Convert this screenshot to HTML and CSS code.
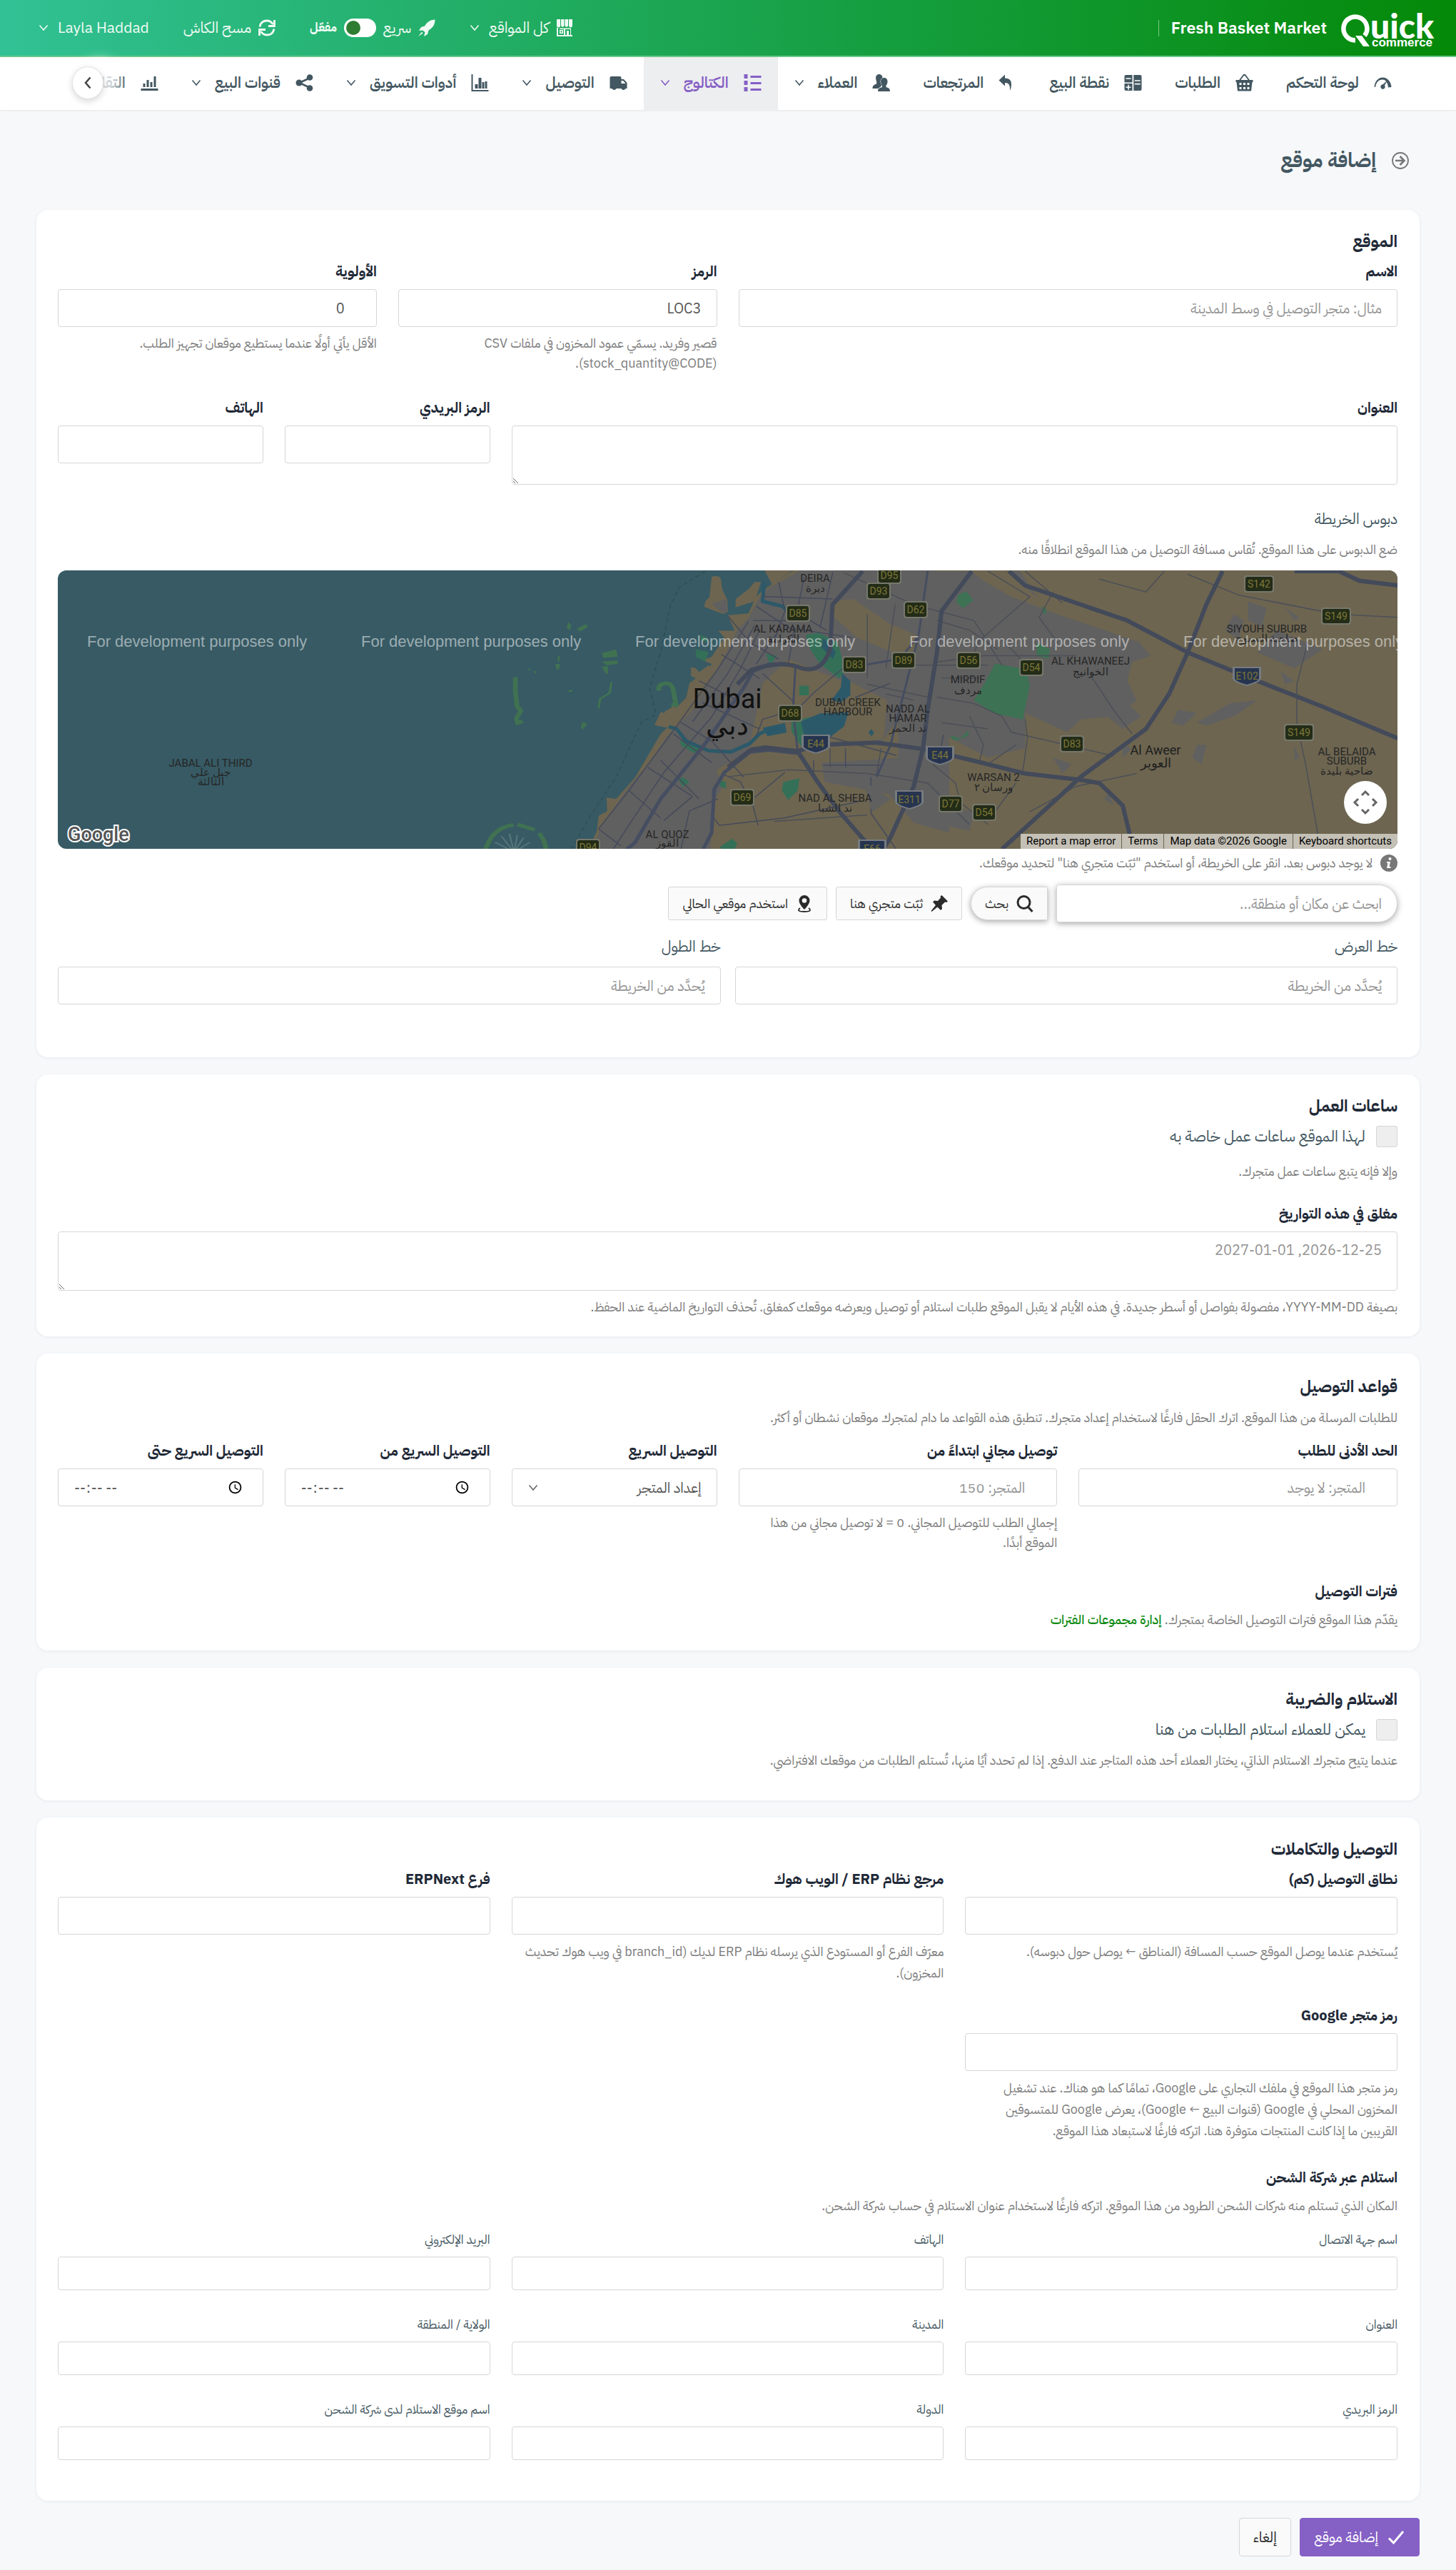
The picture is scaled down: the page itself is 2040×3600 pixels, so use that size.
FILE: index.html
```html
<!DOCTYPE html>
<html lang="ar" dir="rtl">
<head>
<meta charset="utf-8">
<meta name="viewport" content="width=device-width, initial-scale=1">
<title>إضافة موقع</title>
<link rel="stylesheet" href="styles.css">
</head>
<body>
<svg class="defs" aria-hidden="true">
  <symbol id="chev" viewBox="0 0 14 10"><path d="M1.500 1.500 7 8l5.500-6.500" fill="none" stroke="currentColor" stroke-width="1.600"/></symbol>
</svg>

<header class="topbar">
  <a class="logo" href="#" aria-label="Quick commerce">
    <svg width="130" height="56" viewBox="0 0 130 56" fill="#fff">
      <path d="M20 45.500A16.500 16.500 0 1 1 33 39" fill="none" stroke="#fff" stroke-width="6.500"/>
      <path d="M20 39h9l11 15h-9z"/>
      <text class="logo-main" x="41" y="43">uick</text>
      <text class="logo-sub" x="43" y="54">commerce</text>
    </svg>
  </a>
  <span class="store">Fresh Basket Market</span>
  <div class="actions">
    <button class="action" type="button">
      <svg class="ico" viewBox="0 0 24 24" fill="currentColor"><path d="M1 0h5v9a2.500 2.500 0 0 1-5 0zM7 0h4.500v9a2.300 2.300 0 0 1-4.500 0zM12.500 0H17v9a2.300 2.300 0 0 1-4.500 0zM18 0h5v9a2.500 2.500 0 0 1-5 0zM1 12h2v10h8v-8h-6v-1.500h16V22h2v2H1zM5 15h5v5H5zm1.500 1.500v2h2v-2zM13 14v8h2v-6h3v6h2v-8z" fill-rule="evenodd"/></svg>
      <span>كل المواقع</span><svg class="chev push"><use href="#chev"/></svg>
    </button>
    <label class="action switch">
      <svg class="ico" viewBox="0 0 24 24" fill="currentColor"><path d="M23.500.500c-6 0-11 3-14.500 9L4 11l-3 5 5-.500L9.500 18 8 24l5-3 1.500-5.500C20.500 12 23.500 7 23.500.500zM5 17.500 0 24l6.500-4.500z"/></svg>
      <span>سريع</span>
      <input type="checkbox" class="toggle" checked>
      <span class="state">مفعّل</span>
    </label>
    <button class="action" type="button">
      <svg class="ico" viewBox="0 0 24 24" fill="none" stroke="currentColor" stroke-width="2.800"><path d="M2 10.500C3 5 7 2 12 2c4 0 6.500 1.800 8.500 5M22.500 1v8.500H14M22 13.500C21 19 17 22 12 22c-4 0-6.500-1.800-8.500-5M1.500 23v-8.500H10"/></svg>
      <span>مسح الكاش</span>
    </button>
    <button class="action" type="button"><span>Layla Haddad</span><svg class="chev push"><use href="#chev"/></svg></button>
  </div>
</header>

<nav class="nav">
  <div class="nav-track">
    <a class="nav-item" href="#"><svg class="nico" viewBox="0 0 24 24" fill="currentColor"><path d="M0 18C1 9 6 4.500 12 4.500S23.500 10 24 18l-4.500.500C19 12 16 7.500 11.500 7.500 6 7.500 3 11 1.500 18zM19 8l-4.500 7.500a3.200 3.200 0 1 1-2.500-1.200z"/></svg><span>لوحة التحكم</span></a>
    <a class="nav-item" href="#"><svg class="nico" viewBox="0 0 24 24" fill="currentColor"><path d="M0 8h24v3h-1l-1.500 12.500h-19L1 11H0zM5 12v3h3v-3zm5.500 0v3h3v-3zm5.500 0v3h3v-3zM5 18v3h3v-3zm5.500 0v3h3v-3zm5.500 0v3h3v-3z" fill-rule="evenodd"/><path d="m5 9 6-8h2l6 8" fill="none" stroke="currentColor" stroke-width="1.800"/></svg><span>الطلبات</span></a>
    <a class="nav-item" href="#"><svg class="nico" viewBox="0 0 24 24" fill="currentColor"><path d="M2 1h9v10.500H0V3q0-2 2-2zm0 4.200v1.600h7V5.200zM12.800 1H22q2 0 2 2v18q0 2-2 2h-9.200zm1.400 7.200v1.600h8V8.200zm0 4.600v1.600h8v-1.600zM0 13h11v10H2q-2 0-2-2zm4.700 1.700v2.700H2v1.600h2.700v2.700h1.600v-2.700H9v-1.600H6.300v-2.700z" fill-rule="evenodd"/></svg><span>نقطة البيع</span></a>
    <a class="nav-item" href="#"><svg class="nico" viewBox="0 0 24 24" fill="currentColor"><path d="M0 8.500 8.500.500v5C15 5.500 17.500 9 17.500 14c0 4-1 7-2 9 .500-8-1.500-11-7-11v4.500z"/></svg><span>المرتجعات</span></a>
    <a class="nav-item" href="#"><svg class="nico" viewBox="0 0 24 24" fill="currentColor"><path d="M9 0c3.500 0 5 2.500 5 5-3 1.500-3.500 5-2.500 8l1.500 3-5 4H0c0-4 2-5.500 5.500-6.500C6.500 11 4.500 8 4.500 5c0-3 2-5 4.500-5z"/><path d="M16.500 5c3 0 4.500 2.500 4.500 5 0 3-1 4.500-2 5.500v2.500c3.500 1 5.500 2 5.500 6H7.500c0-4 2.500-5 6-6v-2.500c-1-1-2-2.500-2-5.500 0-3 2-5 5-5z"/></svg><span>العملاء</span><svg class="chev"><use href="#chev"/></svg></a>
    <a class="nav-item active" href="#"><svg class="nico" viewBox="0 0 24 24" fill="currentColor"><path d="M0 0h5v6H0zm0 9h5v6H0zm0 9h5v6H0zM9 2h15v3H9zm0 9h15v3H9zm0 9h15v3H9z"/></svg><span>الكتالوج</span><svg class="chev"><use href="#chev"/></svg></a>
    <a class="nav-item" href="#"><svg class="nico" viewBox="0 0 24 24" fill="currentColor"><path d="M2 3h12q2 0 2 2v2h3.500L24 12v8h-2a3.200 3.200 0 0 1-6 0H9a3.200 3.200 0 0 1-6 0H0V5q0-2 2-2zm14 6v4h6l-3.500-4z" fill-rule="evenodd"/></svg><span>التوصيل</span><svg class="chev"><use href="#chev"/></svg></a>
    <a class="nav-item" href="#"><svg class="nico" viewBox="0 0 24 24" fill="currentColor"><path d="M0 0h2v22h22v2H0zM5 14h4v6H5zm5-9h4v15h-4zm5 6h3v9h-3zm4-1h3v10h-3z"/></svg><span>أدوات التسويق</span><svg class="chev"><use href="#chev"/></svg></a>
    <a class="nav-item" href="#"><svg class="nico" viewBox="0 0 24 24" fill="currentColor"><circle cx="4.500" cy="12" r="4.500"/><circle cx="19.500" cy="4.500" r="4.300"/><circle cx="19.500" cy="19.500" r="4.300"/><path d="M20 5 5 12l15 7" fill="none" stroke="currentColor" stroke-width="2.600"/></svg><span>قنوات البيع</span><svg class="chev"><use href="#chev"/></svg></a>
    <a class="nav-item" href="#"><svg class="nico" viewBox="0 0 24 24" fill="currentColor"><path d="M0 20h24v3H0zM3 13h3v5H3zm5-5h3v10H8zm5 3h3v7h-3zm5-8h3v15h-3z"/></svg><span>التقارير</span><svg class="chev"><use href="#chev"/></svg></a>
  </div>
  <button class="nav-next" type="button" aria-label="المزيد"><svg width="10" height="18" viewBox="0 0 10 18"><path d="M8.500 1.500 2 9l6.500 7.500" fill="none" stroke="#444" stroke-width="2.500"/></svg></button>
</nav>

<main class="page">
  <h1 class="page-title">
    <a href="#" class="back" aria-label="رجوع"><svg class="ico" viewBox="0 0 24 24" fill="none" stroke="currentColor" stroke-width="1.800"><circle cx="12" cy="12" r="11"/><path d="M5 12h12M11.500 6l6 6-6 6" stroke-width="2.600"/></svg></a>
    إضافة موقع
  </h1>

  <form class="form">
    <section class="card card-tall">
      <h2 class="card-title">الموقع</h2>
      <div class="grid">
        <div class="field span-6"><label for="name">الاسم</label><input class="control" id="name" type="text" placeholder="مثال: متجر التوصيل في وسط المدينة"></div>
        <div class="field span-3"><label for="code">الرمز</label><input class="control" id="code" type="text" value="LOC3"><p class="hint inset">قصير وفريد. يسمّي عمود المخزون في ملفات CSV (stock_quantity@CODE).</p></div>
        <div class="field span-3"><label for="prio">الأولوية</label><input class="control" id="prio" type="number" value="0"><p class="hint inset">الأقل يأتي أولًا عندما يستطيع موقعان تجهيز الطلب.</p></div>
      </div>
      <div class="grid">
        <div class="field span-8"><label for="addr">العنوان</label><textarea class="control area" id="addr"></textarea></div>
        <div class="field span-2"><label for="zip">الرمز البريدي</label><input class="control" id="zip" type="text"></div>
        <div class="field span-2"><label for="tel">الهاتف</label><input class="control" id="tel" type="tel"></div>
      </div>
      <div class="pin">
        <p class="text">دبوس الخريطة</p>
        <p class="hint">ضع الدبوس على هذا الموقع. تُقاس مسافة التوصيل من هذا الموقع انطلاقًا منه.</p>
        <div class="map">
          <svg class="map-art" viewBox="0 0 1877 390" preserveAspectRatio="xMinYMid slice" role="img" aria-label="Dubai">
            <defs>
              <g id="sd"><rect x="-17" y="-12" width="34" height="24" rx="4" fill="#77786c"/><rect x="-15" y="-10" width="30" height="20" rx="3" fill="#232c17"/></g>
              <g id="ss"><rect x="-21" y="-12" width="42" height="24" rx="4" fill="#77786c"/><rect x="-19" y="-10" width="38" height="20" rx="3" fill="#232c17"/></g>
              <g id="se"><path d="M-20-13h40v17q-2 5-20 10-18-5-20-10z" fill="#767b80"/><path d="M-17-11h34V4q-2 4-17 8-15-4-17-8z" fill="#26344f"/></g>
            </defs>
            <rect width="1877" height="390" fill="#375a64"/>
            <!-- coastline, built-up districts and western roads -->
            <g transform="translate(559 -4) scale(.44643 .33755)">
              <path fill="#6d6550" d="M1070 0 965 90 940 120 915 190 850 198 872 262 820 262 840 290 800 370 770 385 800 400 770 470 740 430 735 415 742 400 700 560 650 600 680 640 640 690 600 780 560 870 500 960 470 955 472 1010 445 1030 440 1090 405 1200H2960V0z"/>
              <path fill="#375a64" d="m700 400 60 0-10 60-20 20-10 60-30 40-50-20z"/>
              <path fill="#6d6550" d="M735 415q15-5 25 20l30-30 10 10-30 55-35-20zM800 38q20-6 28 5l6 50 15 40 2 50-15 10-60-30 5-25 12-15zM955 60l-20 80-60 25v-35l40-40 20-30zM965 10h90l-65 60zM640 600q40 10 45 45l-20 20-45-10z"/>
              <path fill="#606060" d="M1080 10 960 100 915 210 880 260 840 370 740 590 660 700 610 800 540 910 450 1080 425 1200h370l10-230 30-60-20-70 100-80 40-100 10-150 90-60 100 0 90 30 60 60 20 200 60-110 0 160-240 20 10 80 200 50 80 120 110 40V300L1500 0zM800 150l45-20 5 50-15 10z"/>
              <path fill="#6d6550" d="m1185 140 60-10 110 100 100 60 30 40-100 30-130-70-75-90zM830 880l120-90 140 0 60 70-110 0-100 130-60 100zM960 480l80-100 150 80 0 130-100-30-40 170-90 60-40-60zM1230 470l120 80-10 160-180 30-20-60 90-80z"/>
              <path fill="#347058" d="M1095 280l40-10 60 40 25 120-20 30-60-60-30-60zM700 720l20-10 50 40-25 20-40-30zM695 880l15-10 20 20-20 20zM1025 890l50-15-5 50-30 40-20-40zM970 360l35 5-20 40zM1075 490h30v40h-30zM1050 640l60-20 20 20-40 30 20 60-25 20-35-70zM750 340l40 10-10 40-30-20zM820 880l25 10 0 30-20-15zM825 1160l40-35 15 20-20 55zM765 280l20 10 0 20-20-10z"/>
              <path fill="#2c5969" d="M1080 640l60-35 90-5-15 60-50 50-70 10zM1210 440l25 30 0 60-30 30-30-10 30-50zM1150 290l40 60-10 30-35-50zM1300 670l10 15-8 15-10-15zM960 665l70-20 5 40-60 15z"/>
              <path fill="none" stroke="#2c5969" stroke-width="5" vector-effect="non-scaling-stroke" d="M965 60 960 140 1020 160 1080 220M665 660 690 670 720 720 790 760 860 765 920 730 950 690 1000 660"/>
              <g fill="#407252">
                <path d="M350 225l10 15-5 20-10-10zM375 255l30-20 8 10-25 20zM455 355l45-15 5 30-45 5zM455 390l50-5 0 15-35 5zM455 410h20l0 30-8 0zM220 420h10l0 8zM240 430l12 0-4 12zM345 512l18-6-2 12zM395 640l15 10-15 22-6-10zM310 400h14l-4 26-10-10zM318 365h6l-2 25h-6z"/>
                <g fill="none" stroke="#407252"><path d="M184 455l0 60 5 60 12 20-14 30 4 20 16-8M635 510q-5-25 20-30 20 0 25 30l8 60-15 0" stroke-width="15"/><path d="M485 475l-5 45-30 25-5 40" stroke-width="7"/><path d="M88 1180q20-100 90-112M190 1066l55 22M258 1102q25 40 22 90" stroke-width="15"/><path d="M180 1180l-60-40M180 1180l-40-65M180 1180l-15-75M180 1180l10-70M180 1180l30-60M180 1180l50-40" stroke-width="5" stroke="#56757a"/></g>
              </g>
              <g fill="none" stroke="#454a5b" stroke-width="1.500">
                <path vector-effect="non-scaling-stroke" d="M915 225 820 420 700 640 540 925 445 1085M935 240 850 440 740 640M950 260 890 420 800 620 650 850 520 1110 480 1190M600 830l140 120M680 690l120 120M540 925l100 115M445 1085l70 70M760 470l120 80M830 360l120 100M850 200l70 110 90 70M700 640l100 80 100 150M740 950l-90 100M840 860l50 30 40 100 15 80M1060 590 960 630 940 700M1030 850 930 960M1210 420 1120 520 1060 600M770 560l180 110M820 960 730 1010 700 1190M640 800 760 960M800 1030l25 40 200-30 240-70M1120 860v-60M1160 700l220 80M1220 750v80M1150 820h180M1300 870l0 150 90 170M960 120l220 10M1010 60l20 120-30 110M1090 40l-20 130M1180 20l-40 230M940 160l100 90 200 40M930 220l180 0 50 40M1000 280l-60 120M1060 250l-20 150M960 440l100 120M1250 540l110-60M1440 380l90 40 30 140M1480 560l60 60-20 120"/>
              </g>
              <g fill="none" stroke="#454d61" stroke-width="5">
                <path vector-effect="non-scaling-stroke" d="M1035 400 980 402 930 430 900 500 780 730 640 960 560 1140 515 1190M1070 770 980 757 920 765 840 850 808 920 800 1100 765 1190"/>
              </g>
              <path fill="none" stroke="#2b474f" stroke-width="1" stroke-dasharray="6 4" vector-effect="non-scaling-stroke" d="M780 15 700 80 670 160 640 350 605 500 625 610 580 640 500 870 420 1030 350 1190"/>
            </g>
            <!-- eastern districts and desert roads -->
            <g transform="translate(939 -19) scale(.65062 .44643)">
              <path fill="#606060" d="M440 45h190l30 70 60 60 150 65 40 70-40 20-10 60 20 60-40 50-80 10-30 40-90-60 0 110-80 30-120-90-40-200z"/>
              <path fill="#606060" d="M820 370l50 50-10 40 30 40-40 40-50-60zM1120 140l40 20-10 60-30-20zM1090 180l20 20-10 60-30-30zM970 480l40 10-30 40-25-10zM1010 520l70-60 60-10-50 50-60 30zM1180 230l100 60-60 60-80-50zM1200 160l30 30-10 10zM1010 590l20 0-10 60-20-20zM850 590l20 10-20 30zM820 740l10 40-20-20zM1190 360l30 30-20 10zM700 630l40 20-20 30zM470 780l60 20-10 60-60-20zM1220 590l10 40-10 10zM290 700l60 60-40 40z"/>
              <path fill="#6d6550" d="M525 45h75l60 75 150 80 120 60-50 5-180-90-90-50-60-50z"/>
              <path fill="#3d7254" d="M575 335l67 18 8 50-15 107-65-20-40-40 25-60zM495 120l18-12 15 28-22 26-14-20zM665 270l28 20-3 30-25-10zM675 155l12 10-6 18zM480 560l20 10 18-25v15l-25 16-12-5z"/>
              <g fill="none" stroke="#4c4f58" stroke-width="1.500">
                <path vector-effect="non-scaling-stroke" d="M560 45l90 80-110 140-20 70M640 45l80 100M940 45l-40 65-100-40M780 370l50 110 40 75M640 510l5 60-10 100M450 440l80 20 60 40 20 50 220 75M300 400l130 40M300 380v-200M340 430l60 20M360 150l-20 200M450 330l100-20 200 0M250 50l150 100 130 50 60 140M700 110l-30 80 40 80M450 200l70 30 60 60M520 500l30 90-10 60M460 520l100 20M1443 190 1310 180 1100 120 990 55M1250 260l-25 140 0 120 20 140 30 250M440 650l50 60 10 60 60 70M560 830l60-120M880 680l-130 40-100 80M400 340l160 0M460 380l80 0M590 260l60 90M620 590l-60 60M220 600v60M330 600l-10 80M0 690 130 668 300 680 430 710 520 840M100 830 300 810"/>
              </g>
              <path fill="none" stroke="#454d61" stroke-width="3" vector-effect="non-scaling-stroke" d="M430 45 410 250 350 590 320 690M145 350 140 480 150 610M410 250 370 320 250 350"/>
              <g fill="none" stroke="#434a5a" stroke-width="6">
                <path vector-effect="non-scaling-stroke" d="M605 45 640 90 860 200 990 300 1090 360 1150 395 1280 470 1443 570M1220 45h95l45 30 83 15M1065 45 1030 150 990 300 950 430 900 540 760 690 590 917M0 660 50 605 80 598 150 610 190 590 320 583 430 605 530 640 640 680 760 700 800 710 850 780 865 870M525 45 460 170 450 300 430 480 420 600 400 720 350 880 335 917M290 45 225 150 220 290Q200 375 150 345 110 325 50 355L20 400M150 610 190 700 240 800 310 917"/>
              </g>
            </g>
            <g class="m-area">
              <text x="1061" y="16">DEIRA</text><text x="1061" y="30">ديرة</text>
              <text x="1016" y="87">AL KARAMA</text><text x="1016" y="101">الكرامة</text>
              <text x="1694" y="87">SIYOUH SUBURB</text><text x="1694" y="100">ضاحية السيوح</text>
              <text x="1447" y="132">AL KHAWANEEJ</text><text x="1447" y="147">الخوانيج</text>
              <text x="1275" y="158">MIRDIF</text><text x="1275" y="173">مردف</text>
              <text x="1107" y="190">DUBAI CREEK</text><text x="1107" y="203">HARBOUR</text>
              <text x="1191" y="199">NADD AL</text><text x="1191" y="212">HAMAR</text><text x="1191" y="226">ند الحمر</text>
              <text x="1311" y="295">WARSAN 2</text><text x="1311" y="309">ورسان ٢</text>
              <text x="1089" y="324">NAD AL SHEBA</text><text x="1089" y="338">ند الشبا</text>
              <text x="1806" y="259">AL BELAIDA</text><text x="1806" y="272">SUBURB</text><text x="1806" y="286">ضاحية بليدة</text>
              <text x="854" y="375">AL QUOZ</text><text x="854" y="387">القوز</text>
              <text x="214" y="275">JABAL ALI THIRD</text><text x="214" y="288">جبل علي</text><text x="214" y="301">الثالثة</text>
            </g>
            <g class="m-town"><text x="1538" y="258">Al Aweer</text><text x="1538" y="276">العوير</text></g>
            <g class="m-city"><text x="938" y="193">Dubai</text><text x="938" y="230">دبي</text></g>
            <g class="m-road">
              <g transform="translate(1165 7)"><use href="#sd"/><text y="5">D95</text></g>
              <g transform="translate(1150 29)"><use href="#sd"/><text y="5">D93</text></g>
              <g transform="translate(1037 60)"><use href="#sd"/><text y="5">D85</text></g>
              <g transform="translate(1202 55)"><use href="#sd"/><text y="5">D62</text></g>
              <g transform="translate(1116 132)"><use href="#sd"/><text y="5">D83</text></g>
              <g transform="translate(1185 126)"><use href="#sd"/><text y="5">D89</text></g>
              <g transform="translate(1276 126)"><use href="#sd"/><text y="5">D56</text></g>
              <g transform="translate(1364 136)"><use href="#sd"/><text y="5">D54</text></g>
              <g transform="translate(1683 19)"><use href="#ss"/><text y="5">S142</text></g>
              <g transform="translate(1791 64)"><use href="#ss"/><text y="5">S149</text></g>
              <g transform="translate(1666 148)"><use href="#se"/><text y="5">E102</text></g>
              <g transform="translate(1026 200)"><use href="#sd"/><text y="5">D68</text></g>
              <g transform="translate(1062 243)"><use href="#se"/><text y="5">E44</text></g>
              <g transform="translate(1236 259)"><use href="#se"/><text y="5">E44</text></g>
              <g transform="translate(1421 243)"><use href="#sd"/><text y="5">D83</text></g>
              <g transform="translate(1739 227)"><use href="#ss"/><text y="5">S149</text></g>
              <g transform="translate(959 318)"><use href="#sd"/><text y="5">D69</text></g>
              <g transform="translate(1193 321)"><use href="#se"/><text y="5">E311</text></g>
              <g transform="translate(1251 327)"><use href="#sd"/><text y="5">D77</text></g>
              <g transform="translate(1298 339)"><use href="#sd"/><text y="5">D54</text></g>
              <g transform="translate(1141 390)"><use href="#se"/><text y="5">E66</text></g>
              <g transform="translate(743 388)"><use href="#sd"/><text y="5">D94</text></g>
            </g>
            <g class="m-mark">
              <text x="41" y="107">For development purposes only</text><text x="425" y="107">For development purposes only</text><text x="809" y="107">For development purposes only</text><text x="1193" y="107">For development purposes only</text><text x="1577" y="107">For development purposes only</text>
            </g>
            <text class="m-logo" x="14" y="379">Google</text>
          </svg>
          <button class="map-pan" type="button" aria-label="Map camera controls"><svg width="36" height="36" viewBox="0 0 36 36" fill="none" stroke="#666" stroke-width="3"><path d="M13 8l5-5 5 5M13 28l5 5 5-5M8 13l-5 5 5 5M28 13l5 5-5 5"/></svg></button>
          <div class="map-legal" dir="ltr"><a href="#">Report a map error</a><a href="#">Terms</a><span>Map data ©2026 Google</span><button type="button">Keyboard shortcuts</button></div>
        </div>
        <p class="hint info"><svg class="ico" viewBox="0 0 24 24"><circle cx="12" cy="12" r="12" fill="#777"/><circle cx="13.500" cy="6" r="2" fill="#fff"/><path d="M9 10h5l-1.500 7h2v2H9l1.500-7H9z" fill="#fff"/></svg>لا يوجد دبوس بعد. انقر على الخريطة، أو استخدم "ثبّت متجري هنا" لتحديد موقعك.</p>
        <div class="search">
          <input class="control search-box" type="search" aria-label="بحث" placeholder="ابحث عن مكان أو منطقة...">
          <button class="btn search-btn" type="button"><svg class="ico" viewBox="0 0 24 24" fill="none" stroke="currentColor" stroke-width="3"><circle cx="10.500" cy="10" r="8.500"/><path d="m16.500 16.500 6 6.500"/></svg>بحث</button>
          <button class="btn" type="button"><svg class="ico" viewBox="0 0 24 24" fill="currentColor"><path d="m15.500 0 8.500 8.500-2 1.500-2-.500-4.500 4.500.500 5-2 2-4.500-4.500L1.500 23 .500 22 7 14 3 9.500l2-2 5 .500 4-4.500-.500-2z"/></svg>ثبّت متجري هنا</button>
          <button class="btn" type="button"><svg class="ico" viewBox="0 0 24 24" fill="currentColor"><path d="M12 0a7.500 7.500 0 0 1 7.500 7.500c0 4-5 10.500-7.500 12.500-2.500-2-7.500-8.500-7.500-12.500A7.500 7.500 0 0 1 12 0zm0 4.200a3.300 3.300 0 1 0 0 6.600 3.300 3.300 0 0 0 0-6.600z" fill-rule="evenodd"/><path d="M6 18c-5 4 0 5 6 5s11-1 6-5" fill="none" stroke="currentColor" stroke-width="1.800"/></svg>استخدم موقعي الحالي</button>
        </div>
        <div class="coords">
          <div><label class="text" for="lat">خط العرض</label><input class="control" id="lat" type="text" placeholder="يُحدَّد من الخريطة"></div>
          <div><label class="text" for="lng">خط الطول</label><input class="control" id="lng" type="text" placeholder="يُحدَّد من الخريطة"></div>
        </div>
      </div>
    </section>

    <section class="card">
      <h2 class="card-title tight">ساعات العمل</h2>
      <label class="check"><input type="checkbox">لهذا الموقع ساعات عمل خاصة به</label>
      <p class="hint after-check">وإلا فإنه يتبع ساعات عمل متجرك.</p>
      <div class="field"><label for="closed">مغلق في هذه التواريخ</label><textarea class="control area" id="closed" placeholder="2026-12-25, 2027-01-01"></textarea><p class="hint">بصيغة YYYY-MM-DD، مفصولة بفواصل أو أسطر جديدة. في هذه الأيام لا يقبل الموقع طلبات استلام أو توصيل ويعرضه موقعك كمغلق. تُحذف التواريخ الماضية عند الحفظ.</p></div>
    </section>

    <section class="card card-rules">
      <h2 class="card-title">قواعد التوصيل</h2>
      <p class="hint lead">للطلبات المرسلة من هذا الموقع. اترك الحقل فارغًا لاستخدام إعداد متجرك. تنطبق هذه القواعد ما دام لمتجرك موقعان نشطان أو أكثر.</p>
      <div class="grid">
        <div class="field span-3"><label for="min">الحد الأدنى للطلب</label><input class="control" id="min" type="number" placeholder="المتجر: لا يوجد"></div>
        <div class="field span-3"><label for="free">توصيل مجاني ابتداءً من</label><input class="control" id="free" type="number" placeholder="المتجر: 150"><p class="hint inset">إجمالي الطلب للتوصيل المجاني. 0 = لا توصيل مجاني من هذا الموقع أبدًا.</p></div>
        <div class="field span-2"><label for="express">التوصيل السريع</label><div class="select"><select class="control" id="express"><option>إعداد المتجر</option></select><svg class="chev"><use href="#chev"/></svg></div></div>
        <div class="field span-2"><label for="from">التوصيل السريع من</label><input class="control" id="from" type="time" dir="ltr" lang="en"></div>
        <div class="field span-2"><label for="until">التوصيل السريع حتى</label><input class="control" id="until" type="time" dir="ltr" lang="en"></div>
      </div>
      <h3 class="sub-title">فترات التوصيل</h3>
      <p class="hint">يقدّم هذا الموقع فترات التوصيل الخاصة بمتجرك. <a class="link" href="#">إدارة مجموعات الفترات</a></p>
    </section>

    <section class="card card-pickup">
      <h2 class="card-title tight">الاستلام والضريبة</h2>
      <label class="check"><input type="checkbox">يمكن للعملاء استلام الطلبات من هنا</label>
      <p class="hint near">عندما يتيح متجرك الاستلام الذاتي، يختار العملاء أحد هذه المتاجر عند الدفع. إذا لم تحدد أيًا منها، تُستلم الطلبات من موقعك الافتراضي.</p>
    </section>

    <section class="card card-last">
      <h2 class="card-title">التوصيل والتكاملات</h2>
      <div class="grid loose">
        <div class="field span-4"><label for="radius">نطاق التوصيل (كم)</label><input class="control" id="radius" type="number"><p class="hint inset">يُستخدم عندما يوصل الموقع حسب المسافة (المناطق ← يوصل حول دبوسه).</p></div>
        <div class="field span-4"><label for="erp">مرجع نظام ERP / الويب هوك</label><input class="control" id="erp" type="text"><p class="hint inset">معرّف الفرع أو المستودع الذي يرسله نظام ERP لديك (branch_id في ويب هوك تحديث المخزون).</p></div>
        <div class="field span-4"><label for="erpn">فرع ERPNext</label><input class="control" id="erpn" type="text"></div>
        <div class="field span-4"><label for="gcode">رمز متجر Google</label><input class="control" id="gcode" type="text"><p class="hint inset">رمز متجر هذا الموقع في ملفك التجاري على Google، تمامًا كما هو هناك. عند تشغيل المخزون المحلي في Google (قنوات البيع ← Google)، يعرض Google للمتسوقين القريبين ما إذا كانت المنتجات متوفرة هنا. اتركه فارغًا لاستبعاد هذا الموقع.</p></div>
      </div>
      <h3 class="sub-title">استلام عبر شركة الشحن</h3>
      <p class="hint">المكان الذي تستلم منه شركات الشحن الطرود من هذا الموقع. اتركه فارغًا لاستخدام عنوان الاستلام في حساب شركة الشحن.</p>
      <div class="grid small">
        <div class="field span-4"><label for="c1">اسم جهة الاتصال</label><input class="control" id="c1" type="text"></div>
        <div class="field span-4"><label for="c2">الهاتف</label><input class="control" id="c2" type="tel"></div>
        <div class="field span-4"><label for="c3">البريد الإلكتروني</label><input class="control" id="c3" type="email"></div>
        <div class="field span-4"><label for="c4">العنوان</label><input class="control" id="c4" type="text"></div>
        <div class="field span-4"><label for="c5">المدينة</label><input class="control" id="c5" type="text"></div>
        <div class="field span-4"><label for="c6">الولاية / المنطقة</label><input class="control" id="c6" type="text"></div>
        <div class="field span-4"><label for="c7">الرمز البريدي</label><input class="control" id="c7" type="text"></div>
        <div class="field span-4"><label for="c8">الدولة</label><input class="control" id="c8" type="text"></div>
        <div class="field span-4"><label for="c9">اسم موقع الاستلام لدى شركة الشحن</label><input class="control" id="c9" type="text"></div>
      </div>
    </section>

    <div class="buttons">
      <button class="btn primary" type="submit"><svg class="ico" viewBox="0 0 24 24" fill="none" stroke="currentColor" stroke-width="3"><path d="M2 13.500 8.500 20 22 4"/></svg>إضافة موقع</button>
      <button class="btn cancel" type="button">إلغاء</button>
    </div>
  </form>
</main>
</body>
</html>
```
FILE: styles.css
```css
:root {
  --slate: #435761;
  --ink: #1f2937;
  --muted: #7c7c7c;
  --line: #d6d6d8;
  --purple: #8560c5;
}
* { box-sizing: border-box; }
body {
  margin: 0;
  background: #f6f8fa;
  color: var(--slate);
  font-family: "IBM Plex Sans Arabic", "Noto Sans", "Open Sans", sans-serif;
  font-size: 20px;
  line-height: 28px;
}
h1, h2, h3, p { margin: 0; }
button, input, select, textarea { font: inherit; color: inherit; }
button { cursor: pointer; }
a { color: inherit; text-decoration: none; }
.defs { display: none; }
.ico { width: 24px; height: 24px; flex: none; }
.chev { width: 14px; height: 10px; flex: none; }

/* Top bar */
.topbar {
  display: flex;
  align-items: center;
  height: 80px;
  padding: 0 31px 0 54px;
  border-bottom: 2px solid #6cc98c;
  background: linear-gradient(to left, #048908, #1aa44e 50%, #31c194);
  color: #fff;
}
.logo { display: flex; }
.logo svg { overflow: visible; direction: ltr; }
.logo-main { font: 900 48px Lato, sans-serif; }
.logo-sub { font: 700 17px "Liberation Sans", sans-serif; }
.store {
  margin-right: 20px;
  padding-left: 17px;
  border-left: 1px solid #7fc782;
  font-size: 23px;
  font-weight: 600;
  line-height: 23px;
}
.actions { display: flex; align-items: center; gap: 48px; margin-right: auto; }
.action {
  display: flex;
  align-items: center;
  gap: 10px;
  padding: 0;
  border: 0;
  background: none;
  color: #f1fbf5;
  font-size: 21px;
}
.push { margin-right: 3px; }
.state { font-size: 17px; font-weight: 700; }
.toggle {
  appearance: none;
  display: flex;
  justify-content: flex-end;
  width: 45px;
  height: 26px;
  margin: 0;
  padding: 3px;
  border-radius: 13px;
  background: #fff;
}
.toggle::before { content: ""; width: 20px; height: 20px; border-radius: 50%; background: #2e7d32; }

/* Navigation */
.nav { position: relative; background: #fff; box-shadow: 0 1px 3px rgba(0, 0, 0, .08); }
.nav-track { display: flex; height: 74px; margin-left: 123px; padding-right: 67px; overflow: hidden; }
.nav-item {
  display: flex;
  align-items: center;
  gap: 19px;
  flex: none;
  padding: 0 23px 2px;
  font-size: 21px;
  font-weight: 600;
  white-space: nowrap;
}
.nav-item.active { background: #edeef0; color: var(--purple); }
.nico { width: 25px; height: 24px; flex: none; margin-left: 2px; }
.nav-next {
  position: absolute;
  top: 13px;
  left: 101px;
  display: grid;
  place-items: center;
  width: 44px;
  height: 46px;
  border: 1px solid #e4e4e4;
  border-radius: 50%;
  background: #fff;
  box-shadow: 0 3px 10px rgba(0, 0, 0, .16), 16px 0 18px 8px rgba(255, 255, 255, .8);
}

/* Page */
.page { padding: 53px 51px 14px; }
.page-title {
  display: flex;
  align-items: center;
  gap: 22px;
  margin-bottom: 51px;
  padding-right: 15px;
  font-size: 28px;
  font-weight: 700;
  line-height: 36px;
}
.back { display: flex; color: #777; }
.form { display: grid; gap: 24px; }
.card {
  padding: 31px 31px 27px 30px;
  border-radius: 16px;
  background: #fff;
  box-shadow: 0 1px 4px rgba(30, 50, 70, .07);
}
.card-tall { padding-bottom: 74px; }
.card-rules { padding-top: 33px; padding-bottom: 29px; }
.card-pickup { padding-bottom: 42px; }
.card-last { padding-bottom: 57px; }
.card-title { margin-bottom: 15px; color: var(--ink); font-size: 23px; font-weight: 700; line-height: 28px; }
.card-title.tight { margin-bottom: 13px; }
.sub-title { margin: 42px 0 14px; color: var(--ink); font-size: 20px; font-weight: 700; line-height: 24px; }
.grid { display: grid; grid-template-columns: repeat(12, 1fr); gap: 34px 30px; }
.grid + .grid { margin-top: 36px; }
.pin { margin-top: 34px; }
.span-2 { grid-column: span 2; }
.span-3 { grid-column: span 3; }
.span-4 { grid-column: span 4; }
.span-6 { grid-column: span 6; }
.span-8 { grid-column: span 8; }
.field > label { display: block; margin-bottom: 13px; color: var(--ink); font-weight: 700; line-height: 24px; }
.text { display: block; font-size: 21px; line-height: 28px; }
.hint { color: var(--muted); font-size: 18px; line-height: 28px; }
.field .hint { margin-top: 9px; }
.inset { padding-left: 10px; }
.control {
  display: block;
  width: 100%;
  height: 53px;
  padding: 0 21px;
  border: 1px solid var(--line);
  border-radius: 4px;
  outline: 0;
  background: #fff;
  color: #555;
}
.control::placeholder { color: #949494; opacity: 1; }
.control[type="number"] { padding-right: 44px; appearance: textfield; }
.control[type="number"]::-webkit-inner-spin-button { appearance: none; margin: 0; }
.control[type="time"] { padding: 0 25px 0 21px; }
textarea.area { height: 83px; padding-top: 11px; }
.select { display: grid; align-items: center; }
.select > * { grid-area: 1 / 1; }
.select .control { appearance: none; }
.select .chev { margin-right: auto; margin-left: 23px; color: #666; }
.pin .text + .hint { margin: 15px 0; }
.link { color: #0b8a10; font-weight: 500; }

/* Map */
.map { position: relative; height: 390px; overflow: hidden; border-radius: 12px; }
.map-art { display: block; width: 100%; height: 100%; direction: ltr; }
.m-area, .m-town, .m-city, .m-road { text-anchor: middle; font-family: Roboto, sans-serif; }
.m-area { fill: #262626; font-size: 15px; }
.m-town { fill: #1e1e1e; font-size: 18px; }
.m-city { fill: #111; font-size: 38px; }
.m-road { fill: #7d7737; font-size: 14px; }
.m-mark { fill: rgba(255, 255, 255, .5); font: 22px "Liberation Sans", sans-serif; }
.m-logo { fill: #555; stroke: #fff; stroke-width: 4px; paint-order: stroke; font: 500 27px Roboto, sans-serif; }
.map-pan {
  position: absolute;
  right: 15px;
  bottom: 35px;
  display: grid;
  place-items: center;
  width: 60px;
  height: 60px;
  padding: 0;
  border: 0;
  border-radius: 50%;
  background: #fff;
}
.map-legal {
  position: absolute;
  right: 0;
  bottom: 0;
  display: flex;
  gap: 1px;
  color: #000;
  font: 15px/21px Roboto, sans-serif;
}
.map-legal > * { padding: 0 8px; border: 0; background: rgba(215, 212, 205, .82); color: #000; font: inherit; }
.info { display: flex; align-items: center; gap: 11px; margin: 6px 0 16px; }
.search { display: flex; align-items: center; gap: 12px; margin-bottom: 20px; }
.btn {
  display: flex;
  align-items: center;
  gap: 11px;
  height: 47px;
  padding: 0 19px;
  border: 1px solid var(--line);
  border-radius: 3px;
  background: #fafafa;
  color: #2b2b2b;
  font-size: 18px;
}
.search-box.control { flex: 0 0 478px; width: auto; border-radius: 4px 30px 30px 4px; box-shadow: 0 2px 8px rgba(0, 0, 0, .35); appearance: none; }
.search-btn { border-radius: 30px 2px 2px 30px; box-shadow: 0 2px 8px rgba(0, 0, 0, .35); }
.coords { display: grid; grid-template-columns: 1fr 1fr; gap: 20px; }
.coords .text { margin-bottom: 14px; }

/* Check boxes */
.check { display: flex; align-items: center; gap: 15px; width: fit-content; font-size: 22px; line-height: 30px; }
.check input { appearance: none; width: 30px; height: 30px; margin: 0; border: 1px solid #d6d6d6; border-radius: 3px; background: #eee; }
.after-check { margin: 20px 0 33px; }
.near { margin-top: 14px; }
.lead { margin-bottom: 20px; }

/* Integrations */
.loose { row-gap: 32px; }
.loose .hint { line-height: 30px; }
.card-last .sub-title { margin-top: 38px; }
.small { row-gap: 37px; margin-top: 22px; }
.small .field > label { margin-bottom: 11px; color: var(--slate); font-size: 17px; font-weight: 400; }
.small .control { height: 47px; }

.buttons { display: flex; gap: 12px; }
.buttons .btn { height: 54px; border-radius: 4px; font-size: 20px; }
.buttons .primary { gap: 13px; padding: 0 20px; border-color: var(--purple); background: var(--purple); color: #fff; }
```
